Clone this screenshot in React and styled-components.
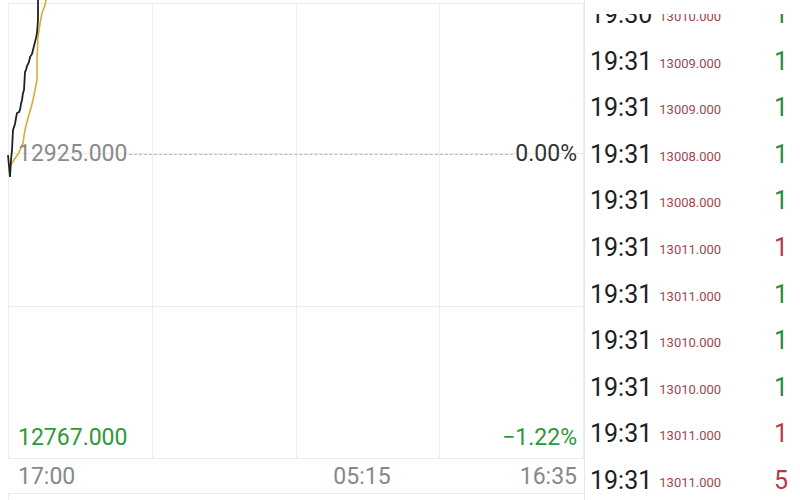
import React from 'react';
import styled, { createGlobalStyle } from 'styled-components';

const Global = createGlobalStyle`
  html, body {
    margin: 0;
    padding: 0;
    background: #fff;
    overflow: hidden;
    font-family: Roboto, "Liberation Sans", sans-serif;
  }
`;

const Page = styled.div`
  display: flex;
  width: 800px;
  height: 500px;
  overflow: hidden;
`;

const Left = styled.div`
  width: 584px;
  display: flex;
  flex-direction: column;
`;

const ChartBox = styled.div`
  position: relative;
  margin: 3px 0 0 8px;
  height: 455px;
  border-top: 1px solid #ececec;
  border-left: 1px solid #ececec;
  display: grid;
  grid-template-columns: repeat(4, 1fr);
  grid-template-rows: 150px 153px 1fr;
`;

const Cell = styled.div`
  border-right: 1px solid #ececec;
  border-bottom: 1px solid #ececec;
`;

const Lines = styled.svg`
  position: absolute;
  left: -9px;
  top: -4px;
  width: 100px;
  height: 200px;
  overflow: visible;
`;

const LabelRow = styled.div`
  position: absolute;
  left: 9px;
  right: 7px;
  top: ${p => p.$top}px;
  display: flex;
  align-items: center;
  font-size: 23px;
  line-height: 26px;
`;

const Label = styled.span`
  color: ${p => p.$color || '#8a8a8a'};
`;

const Dashed = styled.div`
  flex: 1;
  height: 0;
  border-top: 1px dashed #b8b8b8;
  margin: 0 2px;
`;

const Spacer = styled.div`
  flex: 1;
`;

const Axis = styled.div`
  height: 34px;
  display: flex;
  align-items: center;
  padding: 0 7px 0 18px;
  font-size: 23px;
  color: #888;
`;

const Mid = styled.span`
  margin-left: 258px;
`;

const Right = styled.span`
  margin-left: auto;
`;

const Footer = styled.div`
  margin-left: 8px;
  flex: 1;
  border-top: 1px solid #ececec;
  border-left: 1px solid #ececec;
`;

const Side = styled.div`
  flex: 1;
  border-left: 1px solid #e6e6e6;
  padding-top: 14px;
  overflow: hidden;
`;

const Scroll = styled.div`
  height: 100%;
  overflow: hidden;
`;

const List = styled.div`
  margin-top: -22px;
`;

const Row = styled.div`
  height: 46.6px;
  display: flex;
  align-items: baseline;
  padding: 0 12px 0 5px;
  box-sizing: border-box;
  line-height: 46.6px;
`;

const Time = styled.span`
  font-size: 25px;
  color: #1e1e1e;
`;

const Price = styled.span`
  font-size: 13px;
  color: #9b4850;
  margin-left: 7px;
  position: relative;
  top: -2px;
`;

const Vol = styled.span`
  margin-left: auto;
  font-size: 25px;
  color: ${p => (p.$up ? '#2c8a3c' : '#b03c48')};
`;

const trades = [
  ['19:30', '13010.000', 1, true],
  ['19:31', '13009.000', 1, true],
  ['19:31', '13009.000', 1, true],
  ['19:31', '13008.000', 1, true],
  ['19:31', '13008.000', 1, true],
  ['19:31', '13011.000', 1, false],
  ['19:31', '13011.000', 1, true],
  ['19:31', '13010.000', 1, true],
  ['19:31', '13010.000', 1, true],
  ['19:31', '13011.000', 1, false],
  ['19:31', '13011.000', 5, false],
];

const pricePts = '8,155 10,177 11,160 12,150 13,130 15,124 16,118 17,113 19,112 20,110 21,104 22,100 23,93 24,90 25,72 26,70 27,66 29,62 30,57 32,54 33,50 34,46 35,42 36,38 37,33 38,20 38,7 38,-5';
const avgPts = '9,168 12,163 14,160 18,154 20,150 23,143 24,136 25,130 28,118 31,108 33,100 35,90 37,80 37,60 38,37 40,24 42,13 45,5 47,-5';

function App() {
  return (
    <Page>
      <Global />
      <Left>
        <ChartBox>
          {Array.from({ length: 12 }).map((_, i) => <Cell key={i} />)}
          <Lines viewBox="0 0 100 200">
            <polyline points={avgPts} fill="none" stroke="#d8ac3a" strokeWidth="1.6" />
            <polyline points={pricePts} fill="none" stroke="#222" strokeWidth="1.8" />
          </Lines>
          <LabelRow $top={137}>
            <Label>12925.000</Label>
            <Dashed />
            <Label $color="#333">0.00%</Label>
          </LabelRow>
          <LabelRow $top={421}>
            <Label $color="#2a9a3a">12767.000</Label>
            <Spacer />
            <Label $color="#2a9a3a">−1.22%</Label>
          </LabelRow>
        </ChartBox>
        <Axis>
          <span>17:00</span>
          <Mid>05:15</Mid>
          <Right>16:35</Right>
        </Axis>
        <Footer />
      </Left>
      <Side>
        <Scroll>
          <List>
            {trades.map(([t, p, v, up], i) => (
              <Row key={i}>
                <Time>{t}</Time>
                <Price>{p}</Price>
                <Vol $up={up}>{v}</Vol>
              </Row>
            ))}
          </List>
        </Scroll>
      </Side>
    </Page>
  );
}

export default App;
